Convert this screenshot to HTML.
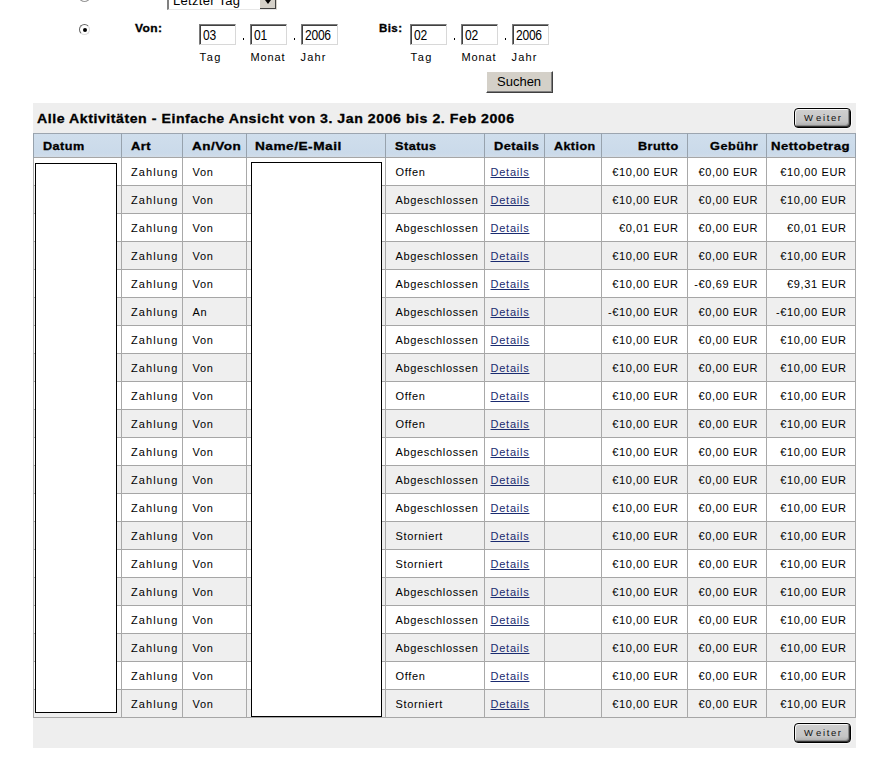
<!DOCTYPE html>
<html><head><meta charset="utf-8"><style>
html,body{margin:0;padding:0;background:#fff;width:890px;height:768px;overflow:hidden;position:relative;font-family:"Liberation Sans", sans-serif;}
.t{position:absolute;white-space:nowrap;line-height:1;font-family:"Liberation Sans", sans-serif;color:#000;}
.bar{position:absolute;left:33px;width:823px;background:#eeeeee;}
.hdr{position:absolute;left:33px;width:823px;top:133px;height:25px;background:linear-gradient(#d0deec,#cadaea 80%,#d3dde8);}
.alt{position:absolute;left:33px;width:823px;height:27px;background:#efefef;}
.hl{position:absolute;left:33px;width:823px;height:1px;background:#a6a6a6;}
.hl.top{background:#9ca5af;}
.vl{position:absolute;top:133px;width:1px;height:585px;background:linear-gradient(#97a2ad 0,#97a2ad 25px,#a9a9a9 25px);}
.box{position:absolute;background:#fff;border:1px solid #000;box-sizing:border-box;}
.inp{position:absolute;top:24px;width:37px;height:21px;box-sizing:border-box;background:#fff;border-top:1px solid #7a7a7a;border-left:1px solid #7a7a7a;border-right:1px solid #d8d8d8;border-bottom:1px solid #d8d8d8;box-shadow:inset 1px 1px 0 #404040;}
.inp span{position:absolute;left:2.5px;top:3px;font-size:14px;line-height:14px;white-space:nowrap;letter-spacing:-0.3px;transform:scaleX(0.86);transform-origin:0 0;}
.dot{position:absolute;top:38px;width:1px;height:2px;background:#000;}
.btn{position:absolute;box-sizing:border-box;border:1px solid #000;border-radius:4px;background:linear-gradient(#d0d0d0,#c4c4c4 70%,#a8a8a8);width:57px;height:20px;left:794px;box-shadow:inset 1px 1px 0 #f4f4f4, inset -1px -1px 0 #333, inset -2px -2px 0 #8a8a8a, 0 0 0 1px #fafafa;}
.btn span{position:absolute;left:9px;top:4px;font-size:9.5px;line-height:10px;letter-spacing:1.6px;color:#111;white-space:nowrap;}
</style></head><body>
<!-- top partial radio -->
<div style="position:absolute;left:79px;top:-9px;width:11px;height:11px;border-radius:50%;box-sizing:border-box;border:1px solid #999;border-top-color:#555;border-left-color:#555;background:#fff"></div>
<!-- select -->
<div style="position:absolute;left:167px;top:-12px;width:110px;height:22px;box-sizing:border-box;border-top:2px solid #808080;border-left:2px solid #808080;border-right:1px solid #d4d0c8;border-bottom:1px solid #e8e8e8;background:#fff;">
  <span style="position:absolute;left:4px;top:3.5px;font-size:13px;line-height:14px;white-space:nowrap;letter-spacing:0.3px">Letzter Tag</span>
  <div style="position:absolute;right:0;top:0;width:16px;height:19px;background:#d4d0c8;border-right:1px solid #404040;border-bottom:1px solid #404040;box-sizing:border-box"></div>
  <div style="position:absolute;right:5px;top:10px;width:0;height:0;border-left:3.5px solid transparent;border-right:3.5px solid transparent;border-top:4px solid #000"></div>
</div>
<!-- checked radio -->
<div style="position:absolute;left:79px;top:24px;width:11px;height:11px;border-radius:50%;box-sizing:border-box;border:1px solid #ddd;border-top-color:#666;border-left-color:#666;background:#fff"></div>
<div style="position:absolute;left:83px;top:28px;width:4px;height:4px;border-radius:50%;background:#000"></div>
<!-- inputs -->
<div class="inp" style="left:199px"><span>03</span></div>
<div class="dot" style="top:38px;left:243px"></div>
<div class="inp" style="left:250px"><span>01</span></div>
<div class="dot" style="top:38px;left:294px"></div>
<div class="inp" style="left:301px"><span>2006</span></div>
<div class="inp" style="left:410px"><span>02</span></div>
<div class="dot" style="top:38px;left:454px"></div>
<div class="inp" style="left:461px"><span>02</span></div>
<div class="dot" style="top:38px;left:505px"></div>
<div class="inp" style="left:512px"><span>2006</span></div>
<!-- Suchen -->
<div style="position:absolute;left:486px;top:71px;width:67px;height:22px;box-sizing:border-box;background:#d4d0c8;border-top:1px solid #fff;border-left:1px solid #fff;border-right:1px solid #404040;border-bottom:1px solid #404040;box-shadow:inset -1px -1px 0 #808080;">
  <span style="position:absolute;left:10px;top:3px;font-size:13px;line-height:13px;">Suchen</span>
</div>
<div class="bar" style="top:103px;height:30px"></div><div class="hdr"></div><div class="alt" style="top:186px"></div><div class="alt" style="top:242px"></div><div class="alt" style="top:298px"></div><div class="alt" style="top:354px"></div><div class="alt" style="top:410px"></div><div class="alt" style="top:466px"></div><div class="alt" style="top:522px"></div><div class="alt" style="top:578px"></div><div class="alt" style="top:634px"></div><div class="alt" style="top:690px"></div><div class="hl" style="top:157px"></div><div class="hl" style="top:185px"></div><div class="hl" style="top:213px"></div><div class="hl" style="top:241px"></div><div class="hl" style="top:269px"></div><div class="hl" style="top:297px"></div><div class="hl" style="top:325px"></div><div class="hl" style="top:353px"></div><div class="hl" style="top:381px"></div><div class="hl" style="top:409px"></div><div class="hl" style="top:437px"></div><div class="hl" style="top:465px"></div><div class="hl" style="top:493px"></div><div class="hl" style="top:521px"></div><div class="hl" style="top:549px"></div><div class="hl" style="top:577px"></div><div class="hl" style="top:605px"></div><div class="hl" style="top:633px"></div><div class="hl" style="top:661px"></div><div class="hl" style="top:689px"></div><div class="hl" style="top:717px"></div><div class="hl top" style="top:133px"></div><div class="vl" style="left:33px"></div><div class="vl" style="left:121px"></div><div class="vl" style="left:182px"></div><div class="vl" style="left:246px"></div><div class="vl" style="left:385px"></div><div class="vl" style="left:484px"></div><div class="vl" style="left:544px"></div><div class="vl" style="left:601px"></div><div class="vl" style="left:687px"></div><div class="vl" style="left:766px"></div><div class="vl" style="left:855px"></div><div class="bar" style="top:718px;height:30px"></div>
<div class="box" style="left:35px;top:163px;width:82px;height:550px"></div>
<div class="box" style="left:251px;top:162px;width:131px;height:555px"></div>
<div class="btn" style="top:108px"><span><i style="font-style:normal;margin-right:1.5px">W</i>eiter</span></div>
<div class="btn" style="top:723px"><span><i style="font-style:normal;margin-right:1.5px">W</i>eiter</span></div>
<span class="t" style="left:134.95px;top:22.69px;font-size:11px;letter-spacing:0.4px;transform:scaleX(1.0913);transform-origin:0 0;font-weight:bold;-webkit-text-stroke:0.3px #000;">Von:</span><span class="t" style="left:379.48px;top:22.69px;font-size:11px;letter-spacing:0.4px;transform:scaleX(1.0486);transform-origin:0 0;font-weight:bold;-webkit-text-stroke:0.3px #000;">Bis:</span><span class="t" style="left:199.50px;top:51.69px;font-size:11px;letter-spacing:1.625px;">Tag</span><span class="t" style="left:410.50px;top:51.69px;font-size:11px;letter-spacing:1.625px;">Tag</span><span class="t" style="left:250.50px;top:51.69px;font-size:11px;letter-spacing:0.855px;">Monat</span><span class="t" style="left:461.50px;top:51.69px;font-size:11px;letter-spacing:0.855px;">Monat</span><span class="t" style="left:300.50px;top:51.69px;font-size:11px;letter-spacing:1.198px;">Jahr</span><span class="t" style="left:511.50px;top:51.69px;font-size:11px;letter-spacing:1.198px;">Jahr</span><span class="t" style="left:37.46px;top:112.00px;font-size:13px;letter-spacing:0.5px;transform:scaleX(1.0873);transform-origin:0 0;font-weight:bold;-webkit-text-stroke:0.3px #000;">Alle Aktivitäten - Einfache Ansicht von 3. Jan 2006 bis 2. Feb 2006</span><span class="t" style="left:43.43px;top:140.69px;font-size:11px;letter-spacing:0.4px;transform:scaleX(1.1483);transform-origin:0 0;font-weight:bold;-webkit-text-stroke:0.3px #000;">Datum</span><span class="t" style="left:131.41px;top:140.69px;font-size:11px;letter-spacing:0.4px;transform:scaleX(1.1790);transform-origin:0 0;font-weight:bold;-webkit-text-stroke:0.3px #000;">Art</span><span class="t" style="left:192.39px;top:140.69px;font-size:11px;letter-spacing:0.4px;transform:scaleX(1.2278);transform-origin:0 0;font-weight:bold;-webkit-text-stroke:0.3px #000;">An/Von</span><span class="t" style="left:255.38px;top:140.69px;font-size:11px;letter-spacing:0.4px;transform:scaleX(1.2423);transform-origin:0 0;font-weight:bold;-webkit-text-stroke:0.3px #000;">Name/E-Mail</span><span class="t" style="left:395.42px;top:140.69px;font-size:11px;letter-spacing:0.4px;transform:scaleX(1.1552);transform-origin:0 0;font-weight:bold;-webkit-text-stroke:0.3px #000;">Status</span><span class="t" style="left:493.92px;top:140.69px;font-size:11px;letter-spacing:0.4px;transform:scaleX(1.1660);transform-origin:0 0;font-weight:bold;-webkit-text-stroke:0.3px #000;">Details</span><span class="t" style="left:554.43px;top:140.69px;font-size:11px;letter-spacing:0.4px;transform:scaleX(1.1353);transform-origin:0 0;font-weight:bold;-webkit-text-stroke:0.3px #000;">Aktion</span><span class="t" style="left:637.50px;top:140.69px;font-size:11px;letter-spacing:0.4px;transform:scaleX(1.1471);transform-origin:0 0;font-weight:bold;-webkit-text-stroke:0.3px #000;">Brutto</span><span class="t" style="left:709.50px;top:140.69px;font-size:11px;letter-spacing:0.4px;transform:scaleX(1.1589);transform-origin:0 0;font-weight:bold;-webkit-text-stroke:0.3px #000;">Gebühr</span><span class="t" style="left:771.40px;top:140.69px;font-size:11px;letter-spacing:0.4px;transform:scaleX(1.1941);transform-origin:0 0;font-weight:bold;-webkit-text-stroke:0.3px #000;">Nettobetrag</span><span class="t" style="left:131.00px;top:166.69px;font-size:11px;letter-spacing:1.089px;">Zahlung</span><span class="t" style="left:192.50px;top:166.69px;font-size:11px;letter-spacing:0.650px;">Von</span><span class="t" style="left:395.50px;top:166.69px;font-size:11px;letter-spacing:0.650px;">Offen</span><span class="t" style="left:490.50px;top:166.69px;font-size:11px;letter-spacing:0.763px;color:#1a2b70;text-decoration:underline;">Details</span><span class="t" style="left:612.21px;top:166.69px;font-size:11px;letter-spacing:0.650px;">€10,00 EUR</span><span class="t" style="left:698.49px;top:166.69px;font-size:11px;letter-spacing:0.650px;">€0,00 EUR</span><span class="t" style="left:780.21px;top:166.69px;font-size:11px;letter-spacing:0.650px;">€10,00 EUR</span><span class="t" style="left:131.00px;top:194.69px;font-size:11px;letter-spacing:1.089px;">Zahlung</span><span class="t" style="left:192.50px;top:194.69px;font-size:11px;letter-spacing:0.650px;">Von</span><span class="t" style="left:395.50px;top:194.69px;font-size:11px;letter-spacing:0.650px;">Abgeschlossen</span><span class="t" style="left:490.50px;top:194.69px;font-size:11px;letter-spacing:0.763px;color:#1a2b70;text-decoration:underline;">Details</span><span class="t" style="left:612.21px;top:194.69px;font-size:11px;letter-spacing:0.650px;">€10,00 EUR</span><span class="t" style="left:698.49px;top:194.69px;font-size:11px;letter-spacing:0.650px;">€0,00 EUR</span><span class="t" style="left:780.21px;top:194.69px;font-size:11px;letter-spacing:0.650px;">€10,00 EUR</span><span class="t" style="left:131.00px;top:222.69px;font-size:11px;letter-spacing:1.089px;">Zahlung</span><span class="t" style="left:192.50px;top:222.69px;font-size:11px;letter-spacing:0.650px;">Von</span><span class="t" style="left:395.50px;top:222.69px;font-size:11px;letter-spacing:0.650px;">Abgeschlossen</span><span class="t" style="left:490.50px;top:222.69px;font-size:11px;letter-spacing:0.763px;color:#1a2b70;text-decoration:underline;">Details</span><span class="t" style="left:618.99px;top:222.69px;font-size:11px;letter-spacing:0.650px;">€0,01 EUR</span><span class="t" style="left:698.49px;top:222.69px;font-size:11px;letter-spacing:0.650px;">€0,00 EUR</span><span class="t" style="left:786.99px;top:222.69px;font-size:11px;letter-spacing:0.650px;">€0,01 EUR</span><span class="t" style="left:131.00px;top:250.69px;font-size:11px;letter-spacing:1.089px;">Zahlung</span><span class="t" style="left:192.50px;top:250.69px;font-size:11px;letter-spacing:0.650px;">Von</span><span class="t" style="left:395.50px;top:250.69px;font-size:11px;letter-spacing:0.650px;">Abgeschlossen</span><span class="t" style="left:490.50px;top:250.69px;font-size:11px;letter-spacing:0.763px;color:#1a2b70;text-decoration:underline;">Details</span><span class="t" style="left:612.21px;top:250.69px;font-size:11px;letter-spacing:0.650px;">€10,00 EUR</span><span class="t" style="left:698.49px;top:250.69px;font-size:11px;letter-spacing:0.650px;">€0,00 EUR</span><span class="t" style="left:780.21px;top:250.69px;font-size:11px;letter-spacing:0.650px;">€10,00 EUR</span><span class="t" style="left:131.00px;top:278.69px;font-size:11px;letter-spacing:1.089px;">Zahlung</span><span class="t" style="left:192.50px;top:278.69px;font-size:11px;letter-spacing:0.650px;">Von</span><span class="t" style="left:395.50px;top:278.69px;font-size:11px;letter-spacing:0.650px;">Abgeschlossen</span><span class="t" style="left:490.50px;top:278.69px;font-size:11px;letter-spacing:0.763px;color:#1a2b70;text-decoration:underline;">Details</span><span class="t" style="left:612.21px;top:278.69px;font-size:11px;letter-spacing:0.650px;">€10,00 EUR</span><span class="t" style="left:694.17px;top:278.69px;font-size:11px;letter-spacing:0.650px;">-€0,69 EUR</span><span class="t" style="left:786.99px;top:278.69px;font-size:11px;letter-spacing:0.650px;">€9,31 EUR</span><span class="t" style="left:131.00px;top:306.69px;font-size:11px;letter-spacing:1.089px;">Zahlung</span><span class="t" style="left:192.50px;top:306.69px;font-size:11px;letter-spacing:0.650px;">An</span><span class="t" style="left:395.50px;top:306.69px;font-size:11px;letter-spacing:0.650px;">Abgeschlossen</span><span class="t" style="left:490.50px;top:306.69px;font-size:11px;letter-spacing:0.763px;color:#1a2b70;text-decoration:underline;">Details</span><span class="t" style="left:607.91px;top:306.69px;font-size:11px;letter-spacing:0.650px;">-€10,00 EUR</span><span class="t" style="left:698.49px;top:306.69px;font-size:11px;letter-spacing:0.650px;">€0,00 EUR</span><span class="t" style="left:775.91px;top:306.69px;font-size:11px;letter-spacing:0.650px;">-€10,00 EUR</span><span class="t" style="left:131.00px;top:334.69px;font-size:11px;letter-spacing:1.089px;">Zahlung</span><span class="t" style="left:192.50px;top:334.69px;font-size:11px;letter-spacing:0.650px;">Von</span><span class="t" style="left:395.50px;top:334.69px;font-size:11px;letter-spacing:0.650px;">Abgeschlossen</span><span class="t" style="left:490.50px;top:334.69px;font-size:11px;letter-spacing:0.763px;color:#1a2b70;text-decoration:underline;">Details</span><span class="t" style="left:612.21px;top:334.69px;font-size:11px;letter-spacing:0.650px;">€10,00 EUR</span><span class="t" style="left:698.49px;top:334.69px;font-size:11px;letter-spacing:0.650px;">€0,00 EUR</span><span class="t" style="left:780.21px;top:334.69px;font-size:11px;letter-spacing:0.650px;">€10,00 EUR</span><span class="t" style="left:131.00px;top:362.69px;font-size:11px;letter-spacing:1.089px;">Zahlung</span><span class="t" style="left:192.50px;top:362.69px;font-size:11px;letter-spacing:0.650px;">Von</span><span class="t" style="left:395.50px;top:362.69px;font-size:11px;letter-spacing:0.650px;">Abgeschlossen</span><span class="t" style="left:490.50px;top:362.69px;font-size:11px;letter-spacing:0.763px;color:#1a2b70;text-decoration:underline;">Details</span><span class="t" style="left:612.21px;top:362.69px;font-size:11px;letter-spacing:0.650px;">€10,00 EUR</span><span class="t" style="left:698.49px;top:362.69px;font-size:11px;letter-spacing:0.650px;">€0,00 EUR</span><span class="t" style="left:780.21px;top:362.69px;font-size:11px;letter-spacing:0.650px;">€10,00 EUR</span><span class="t" style="left:131.00px;top:390.69px;font-size:11px;letter-spacing:1.089px;">Zahlung</span><span class="t" style="left:192.50px;top:390.69px;font-size:11px;letter-spacing:0.650px;">Von</span><span class="t" style="left:395.50px;top:390.69px;font-size:11px;letter-spacing:0.650px;">Offen</span><span class="t" style="left:490.50px;top:390.69px;font-size:11px;letter-spacing:0.763px;color:#1a2b70;text-decoration:underline;">Details</span><span class="t" style="left:612.21px;top:390.69px;font-size:11px;letter-spacing:0.650px;">€10,00 EUR</span><span class="t" style="left:698.49px;top:390.69px;font-size:11px;letter-spacing:0.650px;">€0,00 EUR</span><span class="t" style="left:780.21px;top:390.69px;font-size:11px;letter-spacing:0.650px;">€10,00 EUR</span><span class="t" style="left:131.00px;top:418.69px;font-size:11px;letter-spacing:1.089px;">Zahlung</span><span class="t" style="left:192.50px;top:418.69px;font-size:11px;letter-spacing:0.650px;">Von</span><span class="t" style="left:395.50px;top:418.69px;font-size:11px;letter-spacing:0.650px;">Offen</span><span class="t" style="left:490.50px;top:418.69px;font-size:11px;letter-spacing:0.763px;color:#1a2b70;text-decoration:underline;">Details</span><span class="t" style="left:612.21px;top:418.69px;font-size:11px;letter-spacing:0.650px;">€10,00 EUR</span><span class="t" style="left:698.49px;top:418.69px;font-size:11px;letter-spacing:0.650px;">€0,00 EUR</span><span class="t" style="left:780.21px;top:418.69px;font-size:11px;letter-spacing:0.650px;">€10,00 EUR</span><span class="t" style="left:131.00px;top:446.69px;font-size:11px;letter-spacing:1.089px;">Zahlung</span><span class="t" style="left:192.50px;top:446.69px;font-size:11px;letter-spacing:0.650px;">Von</span><span class="t" style="left:395.50px;top:446.69px;font-size:11px;letter-spacing:0.650px;">Abgeschlossen</span><span class="t" style="left:490.50px;top:446.69px;font-size:11px;letter-spacing:0.763px;color:#1a2b70;text-decoration:underline;">Details</span><span class="t" style="left:612.21px;top:446.69px;font-size:11px;letter-spacing:0.650px;">€10,00 EUR</span><span class="t" style="left:698.49px;top:446.69px;font-size:11px;letter-spacing:0.650px;">€0,00 EUR</span><span class="t" style="left:780.21px;top:446.69px;font-size:11px;letter-spacing:0.650px;">€10,00 EUR</span><span class="t" style="left:131.00px;top:474.69px;font-size:11px;letter-spacing:1.089px;">Zahlung</span><span class="t" style="left:192.50px;top:474.69px;font-size:11px;letter-spacing:0.650px;">Von</span><span class="t" style="left:395.50px;top:474.69px;font-size:11px;letter-spacing:0.650px;">Abgeschlossen</span><span class="t" style="left:490.50px;top:474.69px;font-size:11px;letter-spacing:0.763px;color:#1a2b70;text-decoration:underline;">Details</span><span class="t" style="left:612.21px;top:474.69px;font-size:11px;letter-spacing:0.650px;">€10,00 EUR</span><span class="t" style="left:698.49px;top:474.69px;font-size:11px;letter-spacing:0.650px;">€0,00 EUR</span><span class="t" style="left:780.21px;top:474.69px;font-size:11px;letter-spacing:0.650px;">€10,00 EUR</span><span class="t" style="left:131.00px;top:502.69px;font-size:11px;letter-spacing:1.089px;">Zahlung</span><span class="t" style="left:192.50px;top:502.69px;font-size:11px;letter-spacing:0.650px;">Von</span><span class="t" style="left:395.50px;top:502.69px;font-size:11px;letter-spacing:0.650px;">Abgeschlossen</span><span class="t" style="left:490.50px;top:502.69px;font-size:11px;letter-spacing:0.763px;color:#1a2b70;text-decoration:underline;">Details</span><span class="t" style="left:612.21px;top:502.69px;font-size:11px;letter-spacing:0.650px;">€10,00 EUR</span><span class="t" style="left:698.49px;top:502.69px;font-size:11px;letter-spacing:0.650px;">€0,00 EUR</span><span class="t" style="left:780.21px;top:502.69px;font-size:11px;letter-spacing:0.650px;">€10,00 EUR</span><span class="t" style="left:131.00px;top:530.69px;font-size:11px;letter-spacing:1.089px;">Zahlung</span><span class="t" style="left:192.50px;top:530.69px;font-size:11px;letter-spacing:0.650px;">Von</span><span class="t" style="left:395.50px;top:530.69px;font-size:11px;letter-spacing:0.650px;">Storniert</span><span class="t" style="left:490.50px;top:530.69px;font-size:11px;letter-spacing:0.763px;color:#1a2b70;text-decoration:underline;">Details</span><span class="t" style="left:612.21px;top:530.69px;font-size:11px;letter-spacing:0.650px;">€10,00 EUR</span><span class="t" style="left:698.49px;top:530.69px;font-size:11px;letter-spacing:0.650px;">€0,00 EUR</span><span class="t" style="left:780.21px;top:530.69px;font-size:11px;letter-spacing:0.650px;">€10,00 EUR</span><span class="t" style="left:131.00px;top:558.69px;font-size:11px;letter-spacing:1.089px;">Zahlung</span><span class="t" style="left:192.50px;top:558.69px;font-size:11px;letter-spacing:0.650px;">Von</span><span class="t" style="left:395.50px;top:558.69px;font-size:11px;letter-spacing:0.650px;">Storniert</span><span class="t" style="left:490.50px;top:558.69px;font-size:11px;letter-spacing:0.763px;color:#1a2b70;text-decoration:underline;">Details</span><span class="t" style="left:612.21px;top:558.69px;font-size:11px;letter-spacing:0.650px;">€10,00 EUR</span><span class="t" style="left:698.49px;top:558.69px;font-size:11px;letter-spacing:0.650px;">€0,00 EUR</span><span class="t" style="left:780.21px;top:558.69px;font-size:11px;letter-spacing:0.650px;">€10,00 EUR</span><span class="t" style="left:131.00px;top:586.69px;font-size:11px;letter-spacing:1.089px;">Zahlung</span><span class="t" style="left:192.50px;top:586.69px;font-size:11px;letter-spacing:0.650px;">Von</span><span class="t" style="left:395.50px;top:586.69px;font-size:11px;letter-spacing:0.650px;">Abgeschlossen</span><span class="t" style="left:490.50px;top:586.69px;font-size:11px;letter-spacing:0.763px;color:#1a2b70;text-decoration:underline;">Details</span><span class="t" style="left:612.21px;top:586.69px;font-size:11px;letter-spacing:0.650px;">€10,00 EUR</span><span class="t" style="left:698.49px;top:586.69px;font-size:11px;letter-spacing:0.650px;">€0,00 EUR</span><span class="t" style="left:780.21px;top:586.69px;font-size:11px;letter-spacing:0.650px;">€10,00 EUR</span><span class="t" style="left:131.00px;top:614.69px;font-size:11px;letter-spacing:1.089px;">Zahlung</span><span class="t" style="left:192.50px;top:614.69px;font-size:11px;letter-spacing:0.650px;">Von</span><span class="t" style="left:395.50px;top:614.69px;font-size:11px;letter-spacing:0.650px;">Abgeschlossen</span><span class="t" style="left:490.50px;top:614.69px;font-size:11px;letter-spacing:0.763px;color:#1a2b70;text-decoration:underline;">Details</span><span class="t" style="left:612.21px;top:614.69px;font-size:11px;letter-spacing:0.650px;">€10,00 EUR</span><span class="t" style="left:698.49px;top:614.69px;font-size:11px;letter-spacing:0.650px;">€0,00 EUR</span><span class="t" style="left:780.21px;top:614.69px;font-size:11px;letter-spacing:0.650px;">€10,00 EUR</span><span class="t" style="left:131.00px;top:642.69px;font-size:11px;letter-spacing:1.089px;">Zahlung</span><span class="t" style="left:192.50px;top:642.69px;font-size:11px;letter-spacing:0.650px;">Von</span><span class="t" style="left:395.50px;top:642.69px;font-size:11px;letter-spacing:0.650px;">Abgeschlossen</span><span class="t" style="left:490.50px;top:642.69px;font-size:11px;letter-spacing:0.763px;color:#1a2b70;text-decoration:underline;">Details</span><span class="t" style="left:612.21px;top:642.69px;font-size:11px;letter-spacing:0.650px;">€10,00 EUR</span><span class="t" style="left:698.49px;top:642.69px;font-size:11px;letter-spacing:0.650px;">€0,00 EUR</span><span class="t" style="left:780.21px;top:642.69px;font-size:11px;letter-spacing:0.650px;">€10,00 EUR</span><span class="t" style="left:131.00px;top:670.69px;font-size:11px;letter-spacing:1.089px;">Zahlung</span><span class="t" style="left:192.50px;top:670.69px;font-size:11px;letter-spacing:0.650px;">Von</span><span class="t" style="left:395.50px;top:670.69px;font-size:11px;letter-spacing:0.650px;">Offen</span><span class="t" style="left:490.50px;top:670.69px;font-size:11px;letter-spacing:0.763px;color:#1a2b70;text-decoration:underline;">Details</span><span class="t" style="left:612.21px;top:670.69px;font-size:11px;letter-spacing:0.650px;">€10,00 EUR</span><span class="t" style="left:698.49px;top:670.69px;font-size:11px;letter-spacing:0.650px;">€0,00 EUR</span><span class="t" style="left:780.21px;top:670.69px;font-size:11px;letter-spacing:0.650px;">€10,00 EUR</span><span class="t" style="left:131.00px;top:698.69px;font-size:11px;letter-spacing:1.089px;">Zahlung</span><span class="t" style="left:192.50px;top:698.69px;font-size:11px;letter-spacing:0.650px;">Von</span><span class="t" style="left:395.50px;top:698.69px;font-size:11px;letter-spacing:0.650px;">Storniert</span><span class="t" style="left:490.50px;top:698.69px;font-size:11px;letter-spacing:0.763px;color:#1a2b70;text-decoration:underline;">Details</span><span class="t" style="left:612.21px;top:698.69px;font-size:11px;letter-spacing:0.650px;">€10,00 EUR</span><span class="t" style="left:698.49px;top:698.69px;font-size:11px;letter-spacing:0.650px;">€0,00 EUR</span><span class="t" style="left:780.21px;top:698.69px;font-size:11px;letter-spacing:0.650px;">€10,00 EUR</span>
</body></html>
